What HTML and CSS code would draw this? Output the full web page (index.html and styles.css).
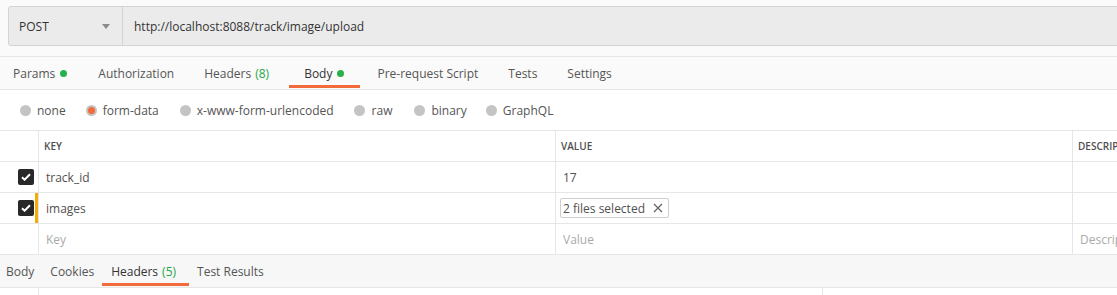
FILE: index.html
```html
<!DOCTYPE html>
<html>
<head>
<meta charset="utf-8">
<link rel="stylesheet" href="styles.css">
</head>
<body>
<div class="app">
  <div class="url-area">
    <div class="url-box">
      <div class="method">
        <span>POST</span>
        <svg class="caret" width="8" height="5" viewBox="0 0 8 5"><path d="M0 0h8L4 5z" fill="#8a8a8a"/></svg>
      </div>
      <div class="url">http://localhost:8088/track/image/upload</div>
    </div>
  </div>

  <div class="req-tabs">
    <div class="tab">Params <span class="dot"></span></div>
    <div class="tab">Authorization</div>
    <div class="tab">Headers <span class="count">(8)</span></div>
    <div class="tab active">Body <span class="dot"></span></div>
    <div class="tab">Pre-request Script</div>
    <div class="tab">Tests</div>
    <div class="tab">Settings</div>
  </div>

  <div class="body-types">
    <label class="radio"><span class="circle"></span>none</label>
    <label class="radio"><span class="circle on"></span>form-data</label>
    <label class="radio"><span class="circle"></span>x-www-form-urlencoded</label>
    <label class="radio"><span class="circle"></span>raw</label>
    <label class="radio"><span class="circle"></span>binary</label>
    <label class="radio"><span class="circle"></span>GraphQL</label>
  </div>

  <div class="kv-table">
    <div class="row head">
      <div class="cell chk"></div>
      <div class="cell">KEY</div>
      <div class="cell">VALUE</div>
      <div class="cell">DESCRIPTION</div>
    </div>
    <div class="row">
      <div class="cell chk"><span class="box"><svg width="10" height="8" viewBox="0 0 10 8"><path d="M1 4.2l2.6 2.5L9 1.2" stroke="#fff" stroke-width="2" fill="none"/></svg></span></div>
      <div class="cell key">track_id</div>
      <div class="cell">17</div>
      <div class="cell"></div>
    </div>
    <div class="row">
      <div class="cell chk marked"><span class="box"><svg width="10" height="8" viewBox="0 0 10 8"><path d="M1 4.2l2.6 2.5L9 1.2" stroke="#fff" stroke-width="2" fill="none"/></svg></span></div>
      <div class="cell key">images</div>
      <div class="cell"><span class="chip">2 files selected <svg class="x" width="10" height="10" viewBox="0 0 10 10"><path d="M1 1l8 8M9 1l-8 8" stroke="#666" stroke-width="1.3" fill="none"/></svg></span></div>
      <div class="cell"></div>
    </div>
    <div class="row">
      <div class="cell chk"></div>
      <div class="cell key ph">Key</div>
      <div class="cell ph">Value</div>
      <div class="cell ph">Description</div>
    </div>
  </div>

  <div class="res-tabs">
    <div class="rtab">Body</div>
    <div class="rtab">Cookies</div>
    <div class="rtab active">Headers <span class="count">(5)</span></div>
    <div class="rtab">Test Results</div>
  </div>
  <div class="res-body">
    <div class="rcol first"></div>
    <div class="rcol second"></div>
    <div class="rcol"></div>
  </div>
</div>
</body>
</html>
```
FILE: styles.css
```css
html, body {
  margin: 0;
  padding: 0;
  background: #fff;
  overflow: hidden;
}
body {
  font-family: "Open Sans", "Liberation Sans", sans-serif;
  font-size: 12px;
  color: #505050;
}
.app {
  width: 1117px;
  height: 295px;
  overflow: hidden;
}
.url-area {
  background: #fafafa;
  padding: 6px 0 10px 8px;
  border-bottom: 1px solid #e6e6e6;
}
.url-box {
  display: flex;
  height: 38px;
  width: 1200px;
  background: #ebebeb;
  border: 1px solid #d4d4d4;
  border-radius: 3px 0 0 3px;
}
.method {
  width: 114px;
  box-sizing: border-box;
  padding: 0 12px 0 10px;
  display: flex;
  align-items: center;
  justify-content: space-between;
  border-right: 1px solid #d4d4d4;
  color: #333;
  font-size: 12px;
}
.caret { margin-top: 1px; }
.url {
  display: flex;
  align-items: center;
  padding-left: 11px;
  color: #333;
}
.req-tabs {
  display: flex;
  height: 32px;
  background: #fafafa;
  border-bottom: 1px solid #e6e6e6;
  padding-left: 1px;
}
.tab {
  position: relative;
  display: flex;
  align-items: center;
  padding: 0 12px;
  color: #555;
}
.tab:nth-child(1) { margin-right: 7px; }
.tab:nth-child(2) { margin-right: 6px; }
.tab:nth-child(3) { margin-right: 8px; }
.tab:nth-child(4) { margin-right: 5px; padding: 0 16px 0 15px; }
.tab:nth-child(5) { margin-right: 6px; }
.tab:nth-child(6) { margin-right: 6px; }
.tab.active { color: #333; }
.tab.active::after {
  content: "";
  position: absolute;
  left: 0;
  right: 0;
  bottom: 1px;
  height: 3px;
  background: #f26b3a;
}
.dot {
  display: inline-block;
  width: 7px;
  height: 7px;
  border-radius: 50%;
  background: #26b14a;
  margin-left: 5px;
}
.count { color: #26a647; margin-left: 4px; }
.body-types {
  display: flex;
  align-items: center;
  height: 40px;
  padding-left: 20px;
  background: #fff;
}
.radio {
  display: flex;
  align-items: center;
  color: #555;
}
.circle {
  width: 11px;
  height: 11px;
  border-radius: 50%;
  background: #c4c4c4;
  margin-right: 6px;
  box-sizing: border-box;
}
.circle.on {
  background: #f26b3a;
  border: 2px solid #c4c4c4;
}
.radio:nth-child(1) { margin-right: 20px; }
.radio:nth-child(2) { margin-right: 21px; }
.radio:nth-child(3) { margin-right: 20px; }
.radio:nth-child(4) { margin-right: 22px; }
.radio:nth-child(5) { margin-right: 19px; }
.radio:nth-child(4) .circle { margin-right: 7px; }
.kv-table {
  border-top: 1px solid #e6e6e6;
  width: 1300px;
}
.row {
  display: grid;
  grid-template-columns: 38px 517px 517px 1fr;
  height: 30px;
  border-bottom: 1px solid #e6e6e6;
}
.cell {
  display: flex;
  align-items: center;
  padding-left: 6px;
  border-left: 1px solid #e6e6e6;
  color: #505050;
}
.cell.chk {
  border-left: none;
  position: relative;
}
.head .cell {
  font-size: 10px;
  font-weight: 600;
  color: #505050;
  padding-left: 5px;
}
.row:not(.head) .cell { padding-left: 7px; }
.row:not(.head) .cell.key { padding-left: 7px; }
.row:not(.head) .cell.chk { padding-left: 18px; }
.box {
  width: 16px;
  height: 16px;
  border-radius: 2px;
  background: #282828;
  display: flex;
  align-items: center;
  justify-content: center;
}
.cell.marked::after {
  content: "";
  position: absolute;
  right: 0;
  top: 0;
  bottom: 0;
  width: 3px;
  background: #f5ac0a;
}
.chip {
  display: inline-flex;
  align-items: center;
  height: 18px;
  padding: 0 5px 0 2px;
  border: 1px solid #cfcfcf;
  border-radius: 2px;
  color: #505050;
  margin-left: -3px;
}
.chip .x { margin-left: 8px; }
.ph { color: #aaa; }
.res-tabs {
  display: flex;
  height: 32px;
  background: #f7f7f7;
  border-bottom: 1px solid #e6e6e6;
}
.rtab {
  position: relative;
  display: flex;
  align-items: center;
  padding: 0 6px;
  margin-right: 4px;
  color: #555;
}
.rtab:nth-child(2) { margin-right: 2px; }
.rtab.active { color: #333; padding: 0 13px 0 9px; margin-right: 2px; }
.rtab.active::after {
  content: "";
  position: absolute;
  left: 0;
  right: 0;
  bottom: 1px;
  height: 3px;
  background: #f26b3a;
}
.res-body {
  display: flex;
  height: 20px;
}
.rcol.first { width: 38px; border-right: 1px solid #e6e6e6; }
.rcol.second { width: 783px; border-right: 1px solid #e6e6e6; }
```
